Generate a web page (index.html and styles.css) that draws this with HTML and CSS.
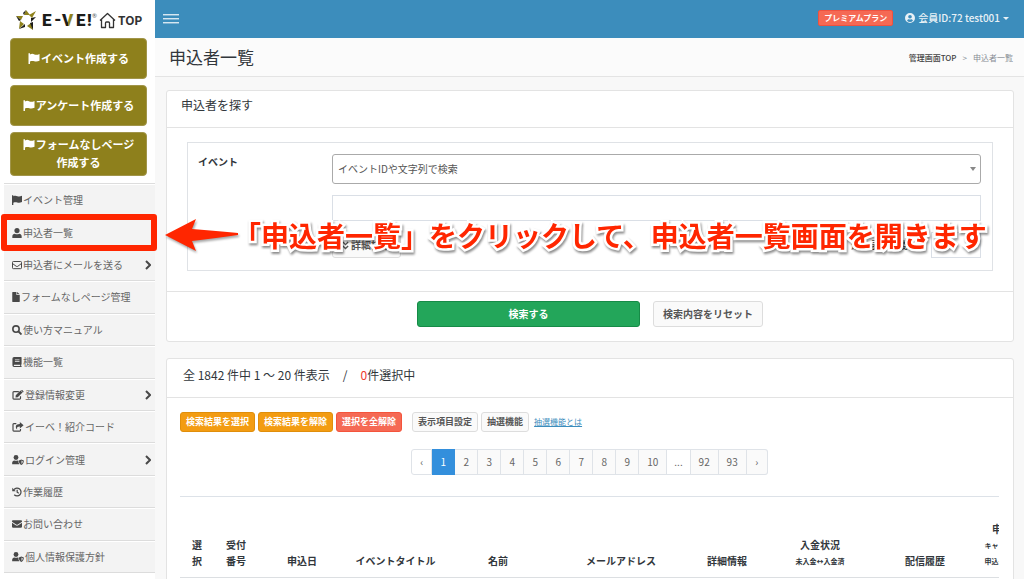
FILE: index.html
```html
<!DOCTYPE html>
<html lang="ja">
<head>
<meta charset="utf-8">
<title>申込者一覧</title>
<link rel="stylesheet" href="styles.css">
</head>
<body>
<svg class="defs" width="0" height="0" aria-hidden="true">
  <symbol id="flag" viewBox="0 0 12 12"><path d="M0 .3h1.600v1.200C3.500 .6 5 .8 6.500 1.500c1.600.7 3.300.5 5.500-.5v7.500c-2.200 1-4 1.100-5.700.5-1.500-.5-3-.5-4.700.2V12H0z"/></symbol>
  <symbol id="user" viewBox="0 0 12 12"><circle cx="6" cy="3.100" r="3.100"/><path d="M.4 12V9.800C.4 8 1.700 6.800 3.400 6.800c1.700.8 3.500.8 5.200 0 1.700 0 3 1.200 3 3V12z"/></symbol>
  <symbol id="mail" viewBox="0 0 12 12"><rect x=".6" y="1.800" width="10.800" height="8.600" rx="1" fill="none" stroke="currentColor" stroke-width="1.200"/><path d="M1 4.500l4 3q1 .7 2 0l4-3" fill="none" stroke="currentColor" stroke-width="1.200"/></symbol>
  <symbol id="mailfill" viewBox="0 0 12 12"><path d="M0 2.600q0-1 1-1h10q1 0 1 1v.6L7 6.700q-1 .6-2 0L0 3.200zM0 4.600l4.500 3q1.500 1 3 0l4.500-3v4.800q0 1-1 1H1q-1 0-1-1z"/></symbol>
  <symbol id="file" viewBox="0 0 9 12"><path d="M0 .5Q0 0 .5 0H5v3.500h4v8q0 .5-.5.500h-8q-.5 0-.5-.5zM5.800 0L9 2.800H5.800z"/></symbol>
  <symbol id="search" viewBox="0 0 12 12"><circle cx="4.800" cy="4.800" r="3.800" fill="none" stroke="currentColor" stroke-width="1.900"/><path d="M7.500 7.500l3.900 3.900" stroke="currentColor" stroke-width="2.200"/></symbol>
  <symbol id="book" viewBox="0 0 11 12"><path fill-rule="evenodd" d="M2 0h8.500q.5 0 .5.500V8.700l-.5.500v1.600h.5V12H2Q0 12 0 10V2Q0 0 2 0zM3 3v.9h5.500V3zM3 5v.9h5.500V5zM2 9.200q-.8.800 0 1.600h7.300V9.200z"/></symbol>
  <symbol id="edit" viewBox="0 0 14 12"><path d="M8 2H2Q1 2 1 3v7q0 1 1 1h7q1 0 1-1V7.500" fill="none" stroke="currentColor" stroke-width="1.400"/><path d="M4.300 6.300L10 .6l2.400 2.400-5.700 5.700-2.700.3zM10.600 0l.5-.2q.6-.3 1 .2L13.500 1.400q.4.500 0 1l-.6.500z"/></symbol>
  <symbol id="share" viewBox="0 0 14 12"><path d="M5 2H2Q1 2 1 3v7q0 1 1 1h7q1 0 1-1V8.500" fill="none" stroke="currentColor" stroke-width="1.400"/><path d="M9.200 0L13.700 3.900 9.200 7.800V5.500C6.500 5.500 5.400 6.300 6 9 3.200 6 4 2.300 9.200 2.300z"/></symbol>
  <symbol id="usershield" viewBox="0 0 14 12"><circle cx="4.600" cy="3" r="2.900"/><path d="M0 11V9.500C0 7.500 1.200 6.700 2.600 6.500c1.400.6 2.700.6 4 0l1 .3V9l1 2.200H.8Q0 11.200 0 11z"/><path fill-rule="evenodd" d="M11 5.300l3 1.300c0 2.700-1 4.600-3 5.400-2-.8-3-2.700-3-5.400zm.2 1.400v3.900c1-.6 1.500-1.700 1.500-3.200z"/></symbol>
  <symbol id="history" viewBox="0 0 12 12"><path d="M2.400 3.200A4.700 4.700 0 1 1 2.700 9.300M6.200 3.200V6.300L8.200 7.600" fill="none" stroke="currentColor" stroke-width="1.500"/><path d="M.3.800V5h4.200z"/></symbol>
  <symbol id="chev" viewBox="0 0 6 10"><path d="M1 1l4 4-4 4" fill="none" stroke="currentColor" stroke-width="2"/></symbol>
</svg>

<div class="app">
  <aside class="sidebar">
    <a class="brand" href="#" aria-label="E-VE! TOP">
      <svg viewBox="0 0 128 21" class="brand-art">
        <defs><linearGradient id="vee"><stop offset=".5" stop-color="#1c1c1a"/><stop offset=".5" stop-color="#8f821c"/></linearGradient></defs>
        <g fill="#8f821c"><path d="M10 1l4 5-6 0z"/><path d="M20 2l-7 4 3 3z"/><path d="M0 7l7 0-2 4z"/><path d="M3 20l1-8 4 3z"/><path d="M17 21l-6-4 4-3z"/></g>
        <g fill="#1c1c1a"><path d="M10 1l-2 5-1-2z"/><path d="M20 8l-5 1v4z"/><path d="M0 7l5 4-2 1z"/><path d="M3 20l6-5v3z"/><path d="M17 21l0-8-3 1z"/></g>
        <text class="brand-name" y="17" x="26">E</text><text class="brand-name" y="16" x="38">-</text><text class="brand-name" y="17" x="46" fill="url(#vee)">V</text><text class="brand-name" y="17" x="60">E</text><text class="brand-name" y="17" x="71">!</text><text class="brand-reg" x="76" y="9">®</text>
        <path d="M84 11.500L91.500 4.500 99 11.500M85.500 10.500V18.500h4V14q0-1 1-1h2q1 0 1 1v4.500h4V10.500" fill="none" stroke="#333" stroke-width="1.300" stroke-linejoin="round"/>
        <text class="brand-top" x="102" y="16">TOP</text>
      </svg>
    </a>
    <div class="actions">
      <button type="button" class="create"><svg><use href="#flag"/></svg>イベント作成する</button>
      <button type="button" class="create"><svg><use href="#flag"/></svg>アンケート作成する</button>
      <button type="button" class="create"><svg><use href="#flag"/></svg>フォームなしページ<br>作成する</button>
    </div>
    <nav>
      <ul class="menu">
        <li><a href="#"><svg><use href="#flag"/></svg>イベント管理</a></li>
        <li class="current"><a href="#"><svg><use href="#user"/></svg>申込者一覧</a></li>
        <li><a href="#"><svg><use href="#mail"/></svg>申込者にメールを送る<svg class="more"><use href="#chev"/></svg></a></li>
        <li><a href="#"><svg class="thin"><use href="#file"/></svg>フォームなしページ管理</a></li>
        <li><a href="#"><svg><use href="#search"/></svg>使い方マニュアル</a></li>
        <li><a href="#"><svg><use href="#book"/></svg>機能一覧</a></li>
        <li><a href="#"><svg class="wide"><use href="#edit"/></svg>登録情報変更<svg class="more"><use href="#chev"/></svg></a></li>
        <li><a href="#"><svg class="wide"><use href="#share"/></svg>イーベ！紹介コード</a></li>
        <li><a href="#"><svg class="wide"><use href="#usershield"/></svg>ログイン管理<svg class="more"><use href="#chev"/></svg></a></li>
        <li><a href="#"><svg><use href="#history"/></svg>作業履歴</a></li>
        <li><a href="#"><svg><use href="#mailfill"/></svg>お問い合わせ</a></li>
        <li><a href="#"><svg class="wide"><use href="#usershield"/></svg>個人情報保護方針</a></li>
      </ul>
    </nav>
  </aside>

  <div class="main">
    <header class="topbar">
      <button type="button" class="burger" aria-label="メニュー"><i></i><i></i><i></i></button>
      <span class="plan">プレミアムプラン</span>
      <button type="button" class="account">
        <svg viewBox="0 0 12 12"><path fill-rule="evenodd" d="M6 0a6 6 0 1 1 0 12A6 6 0 0 1 6 0zM6 2.300a2.200 2.200 0 1 0 0 4.400 2.200 2.200 0 0 0 0-4.400zM2.500 9.200a4.700 4.700 0 0 0 7 0C9 8 8 7.500 7.300 7.500q-1.300.5-2.600 0C4 7.500 3 8 2.500 9.200z"/></svg>
        会員ID:72 test001<span class="caret"></span>
      </button>
    </header>
    <div class="titlebar">
      <h1>申込者一覧</h1>
      <div class="crumbs"><a href="#">管理画面TOP</a><span>&gt;</span><span>申込者一覧</span></div>
    </div>

    <main class="content">
      <form class="card">
        <h2>申込者を探す</h2>
        <div class="search-body">
          <div class="search-box">
            <label for="event">イベント</label>
            <div class="fields">
              <div class="pick"><select id="event"><option>イベントIDや文字列で検索</option></select></div>
              <input type="text" class="keyword" aria-label="キーワード">
              <div class="options">
                <button type="button" class="btn detail"><svg viewBox="0 0 8 10"><path d="M1 1l3 3 3-3M1 5.500l3 3 3-3" fill="none" stroke="currentColor" stroke-width="1.600"/></svg>詳細検索</button>
                <label for="count">最大表示件数</label>
                <input type="text" id="count">
              </div>
            </div>
          </div>
        </div>
        <div class="card-foot">
          <button type="button" class="btn submit">検索する</button>
          <button type="reset" class="btn">検索内容をリセット</button>
        </div>
      </form>

      <section class="card results">
        <h2>全 1842 件中 1 〜 20 件表示<span class="slash">/</span><em>0</em>件選択中</h2>
        <div class="result-body">
          <div class="tools">
            <button type="button" class="btn small orange">検索結果を選択</button>
            <button type="button" class="btn small orange">検索結果を解除</button>
            <button type="button" class="btn small red">選択を全解除</button>
            <button type="button" class="btn small apart">表示項目設定</button>
            <button type="button" class="btn small">抽選機能</button>
            <a href="#">抽選機能とは</a>
          </div>
          <nav class="pages" aria-label="ページ">
            <span>‹</span><a href="#" class="on">1</a><a href="#">2</a><a href="#">3</a><a href="#">4</a><a href="#">5</a><a href="#">6</a><a href="#">7</a><a href="#">8</a><a href="#">9</a><a href="#" class="two">10</a><span>...</span><a href="#" class="two">92</a><a href="#" class="two">93</a><a href="#">›</a>
          </nav>
          <div class="table-wrap">
            <table>
              <colgroup><col class="c-check"><col class="c-no"><col class="c-date"><col class="c-title"><col class="c-name"><col class="c-mail"><col class="c-info"><col class="c-pay"><col class="c-log"><col class="c-state"></colgroup>
              <thead><tr>
                <th>選<br>択</th><th>受付<br>番号</th><th>申込日</th><th>イベントタイトル</th><th>名前</th><th>メールアドレス</th><th>詳細情報</th>
                <th>入金状況<small>未入金↔入金済</small></th><th>配信履歴</th><th>申込<small>キャンセル</small><small>申込↔取消</small></th>
              </tr></thead>
            </table>
          </div>
        </div>
      </section>
    </main>
  </div>
</div>

<div class="focus-ring"></div>
<div class="callout">
  <svg viewBox="0 0 74 32"><path d="M0 16L31 0l-4 10q25 2 46 4v2q-21 3-46 6l4 10z"/></svg>
  <p>「申込者一覧」をクリックして、申込者一覧画面を開きます</p>
</div>
</body>
</html>
```
FILE: styles.css
```css
* { box-sizing: border-box; }
body {
  margin: 0;
  height: 100vh;
  overflow: hidden;
  background: #f8f8f8;
  color: #32373c;
  font: 10px/16px "Noto Sans CJK JP", sans-serif;
}
h1, h2, p, ul { margin: 0; padding: 0; font-weight: 400; }
a { color: inherit; text-decoration: none; }
button, input, select { font: inherit; color: inherit; margin: 0; }
.defs { position: absolute; }

.app { display: grid; grid-template-columns: 155px minmax(0, 1fr); min-height: 100vh; }

/* Sidebar */
.sidebar { background: #fff; padding-left: 4px; }
.brand { display: flex; padding: 9px 0 8px 12px; }
.brand-art { width: 128px; height: 21px; overflow: visible; }
.brand-name { font: 900 17px Roboto, sans-serif; fill: #1c1c1a; }
.brand-name[fill] { fill: url(#vee); }
.brand-reg { font: 6px Lato, sans-serif; fill: #555; }
.brand-top { font: 600 12px "Noto Sans CJK JP", sans-serif; fill: #333; }
.actions { display: flex; flex-direction: column; gap: 6px; padding: 0 8px 7px 6px; }
.create {
  min-height: 41px;
  padding: 2px 0 4px;
  border: 1px solid #a1954a;
  border-radius: 4px;
  background: #8e801c;
  color: #fff;
  font-size: 11px;
  font-weight: 700;
  line-height: 18px;
}
.create svg { width: 12px; height: 11px; margin-right: 1px; vertical-align: -1px; fill: currentColor; }
.menu { display: grid; grid-auto-rows: 1fr; min-height: 390px; list-style: none; border-top: 1px solid #ddd; }
.menu li { display: flex; background: #f3f3f3; border-top: 1px solid #fff; border-bottom: 1px solid #dcdcdc; color: #666; }
.menu a { display: flex; flex: 1; align-items: center; gap: 1px; padding: 0 4px 0 8px; }
.menu svg { width: 10px; height: 10px; fill: currentColor; color: #484848; }
.menu .thin { width: 8px; }
.menu .wide { width: 12px; }
.menu .more { width: 6px; margin-left: auto; }

/* Header */
.topbar { display: flex; align-items: center; height: 38px; padding: 0 15px 2px 8px; background: #3c8dbc; color: #e8f1f6; }
.burger { display: flex; flex-direction: column; gap: 3px; width: 16px; margin-right: auto; padding: 0; border: 0; background: none; }
.burger i { height: 1px; background: #d6e7f1; box-shadow: 0 1px #7fb3d2; }
.plan { padding: 0 5px; border: 1px solid #ee5240; border-radius: 2px; background: #f56954; color: #fff; font-size: 8px; font-weight: 700; line-height: 14px; }
.account { display: flex; align-items: center; gap: 3px; margin-left: 12px; padding: 0; border: 0; background: none; font-weight: 500; }
.account svg { width: 10px; height: 10px; fill: currentColor; }
.caret { border: 3px solid transparent; border-top: 3px solid currentColor; border-bottom: 0; }
.titlebar { display: flex; align-items: center; justify-content: space-between; height: 39px; padding: 0 11px 0 14px; background: #fbfbfb; border-bottom: 1px solid #e4e4e4; }
h1 { font-size: 17px; line-height: 24px; }
.crumbs { display: flex; gap: 6px; padding-top: 2px; font-size: 8px; color: #878d94; }
.crumbs a { color: #444; font-weight: 500; }

/* Cards */
.content { display: flex; flex-direction: column; gap: 16px; padding: 13px 10px 0 11px; }
.card { background: #fff; border: 1px solid #e3e3e3; border-radius: 3px; }
h2 { padding: 4px 14px 12px; border-bottom: 1px solid #e3e3e3; font-size: 12px; line-height: 20px; }
.search-body { padding: 14px 20px 20px; }
.search-box { display: grid; grid-template-columns: 134px minmax(0, 1fr); padding: 11px 11px 12px 10px; border: 1px solid #dfe2e6; }
.search-box label { font-weight: 700; }
.fields { display: flex; flex-direction: column; gap: 11px; }
.pick { position: relative; }
.pick::after { content: ""; position: absolute; right: 5px; top: 13px; border: 3px solid transparent; border-top: 4px solid #888; border-bottom: 0; }
.pick select { display: block; width: 100%; height: 30px; padding: 0 5px; border: 1px solid #aaa; border-radius: 3px; background: #fff; appearance: none; color: #555; }
.keyword, #count { height: 26px; border: 1px solid #dadfe6; background: #fff; }
.options { display: flex; align-items: center; }
.options label { margin: 0 20px 0 auto; font-weight: 500; }
#count { width: 50px; }
.btn {
  display: flex;
  align-items: center;
  justify-content: center;
  height: 26px;
  padding: 0 9px;
  border: 1px solid #ddd;
  border-radius: 3px;
  background: #fafafa;
  color: #555;
  font-weight: 700;
}
.detail { gap: 2px; }
.detail svg { width: 7px; height: 9px; }
.card-foot { display: flex; justify-content: center; gap: 13px; padding: 9px 0 14px; border-top: 1px solid #e3e3e3; }
.submit { width: 223px; background: #23a65a; border-color: #168b47; color: #fff; }

/* Results */
.results h2 { padding: 6px 16px 12px; }
.slash { margin: 0 13px; }
em { font-style: normal; color: #ee3a2c; }
.result-body { padding: 14px 14px 40px 13px; }
.tools { display: flex; align-items: center; gap: 3px; }
.small { height: 20px; padding: 0 5px; font-size: 9px; }
.orange { background: #f39c12; border-color: #e08e0b; color: #fff; }
.red { background: #f56954; border-color: #f4543c; color: #fff; }
.apart { margin-left: 7px; }
.tools a { margin-left: 2px; color: #3c8dbc; font-size: 8px; text-decoration: underline; }
.pages { display: flex; justify-content: center; margin: 17px 0 21px; color: #666; }
.pages > * { min-width: 23px; padding: 4px 7px; border: 1px solid #dfe3e8; border-left-width: 0; background: #fafafa; text-align: center; }
.pages span { background: #fff; }
.pages .two { min-width: 28px; }
.pages > :first-child { min-width: 21px; border-left-width: 1px; border-radius: 3px 0 0 3px; }
.pages > :last-child { min-width: 21px; border-radius: 0 3px 3px 0; }
.pages .on { background: #338fdc; border-color: #338fdc; color: #fff; }
.table-wrap { overflow: hidden; border-top: 1px solid #dde2e8; padding-top: 15px; }
table { width: 851px; table-layout: fixed; border-collapse: collapse; }
th { padding: 9px 0 8px; border-bottom: 1px solid #dcdfe2; vertical-align: bottom; font-weight: 700; }
th small { display: block; font-size: 7px; white-space: nowrap; }
.c-check { width: 34px; }
.c-no { width: 44px; }
.c-date { width: 88px; }
.c-title { width: 99px; }
.c-name { width: 106px; }
.c-mail { width: 140px; }
.c-info { width: 72px; }
.c-pay { width: 114px; }
.c-log { width: 96px; }
.c-state { width: 58px; }

/* Annotations laid over the page */
.focus-ring { position: absolute; left: 1px; top: 214px; width: 156px; height: 37px; border: 6px solid #ff2600; border-radius: 3px; }
.callout { position: absolute; left: 165px; top: 215px; display: flex; align-items: center; white-space: nowrap; color: #ff2600; }
.callout svg { flex: none; width: 74px; height: 32px; margin-right: -6px; overflow: visible; fill: currentColor; filter: drop-shadow(1px 2px 1px rgba(0, 0, 0, .35)); }
.callout p { font-size: 28px; font-weight: 700; line-height: 40px; paint-order: stroke fill; -webkit-text-stroke: 5px #fff; filter: drop-shadow(1px 2px 1px rgba(0, 0, 0, .45)); }
```
